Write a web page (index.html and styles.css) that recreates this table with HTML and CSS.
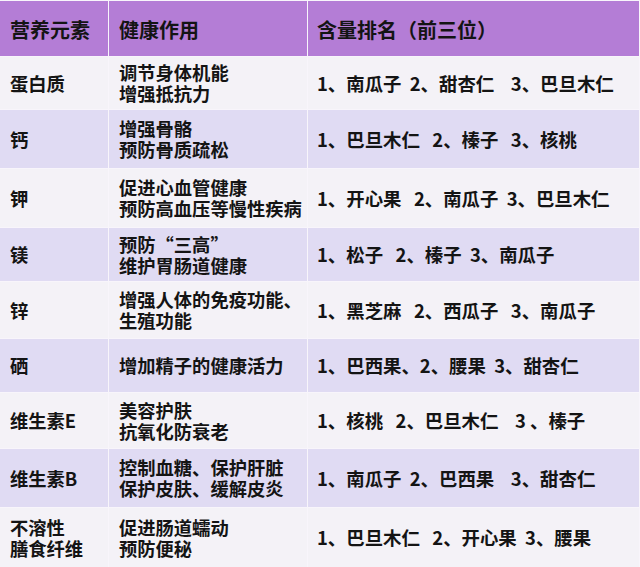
FILE: index.html
```html
<!DOCTYPE html>
<html lang="zh">
<head>
<meta charset="utf-8">
<link rel="stylesheet" href="styles.css">
</head>
<body>
<div class="table">
  <div class="row head">
    <div class="cell">营养元素</div>
    <div class="cell">健康作用</div>
    <div class="cell">含量排名（前三位）</div>
  </div>
  <div class="row odd">
    <div class="cell">蛋白质</div>
    <div class="cell">调节身体机能<br>增强抵抗力</div>
    <div class="cell rank">1、南瓜子  2、甜杏仁    3、巴旦木仁</div>
  </div>
  <div class="row even">
    <div class="cell">钙</div>
    <div class="cell">增强骨骼<br>预防骨质疏松</div>
    <div class="cell rank">1、巴旦木仁   2、榛子   3、核桃</div>
  </div>
  <div class="row odd">
    <div class="cell">钾</div>
    <div class="cell">促进心血管健康<br>预防高血压等慢性疾病</div>
    <div class="cell rank">1、开心果   2、南瓜子  3、巴旦木仁</div>
  </div>
  <div class="row even">
    <div class="cell">镁</div>
    <div class="cell">预防“三高”<br>维护胃肠道健康</div>
    <div class="cell rank">1、松子   2、榛子  3、南瓜子</div>
  </div>
  <div class="row odd">
    <div class="cell">锌</div>
    <div class="cell">增强人体的免疫功能、<br>生殖功能</div>
    <div class="cell rank">1、黑芝麻   2、西瓜子   3、南瓜子</div>
  </div>
  <div class="row even">
    <div class="cell">硒</div>
    <div class="cell">增加精子的健康活力</div>
    <div class="cell rank">1、巴西果、2、腰果  3、甜杏仁</div>
  </div>
  <div class="row odd">
    <div class="cell">维生素E</div>
    <div class="cell">美容护肤<br>抗氧化防衰老</div>
    <div class="cell rank">1、核桃   2、巴旦木仁    3 、榛子</div>
  </div>
  <div class="row even">
    <div class="cell">维生素B</div>
    <div class="cell">控制血糖、保护肝脏<br>保护皮肤、缓解皮炎</div>
    <div class="cell rank">1、南瓜子  2、巴西果    3、甜杏仁</div>
  </div>
  <div class="row odd">
    <div class="cell">不溶性<br>膳食纤维</div>
    <div class="cell">促进肠道蠕动<br>预防便秘</div>
    <div class="cell rank">1、巴旦木仁   2、开心果  3、腰果</div>
  </div>
</div>
</body>
</html>
```

FILE: styles.css
```css
html, body {
  margin: 0;
  padding: 0;
  width: 640px;
  height: 567px;
  overflow: hidden;
}
body {
  font-family: "Noto Sans CJK SC", "Noto Sans", sans-serif;
  font-weight: 700;
  color: #141414;
  background: #f6f3fa;
}
.table {
  display: grid;
  grid-template-rows: 55px 52px 58px 58px 53px 56px 53px 55px 58px 59px;
  row-gap: 1px;
  padding: 1px 1px 0 0;
  background: #f8f5fb;
  height: 567px;
  box-sizing: border-box;
}
.row {
  display: grid;
  grid-template-columns: 108px 198px 1fr;
  column-gap: 1px;
}
.cell {
  display: flex;
  align-items: center;
  padding-left: 10px;
  font-size: 18.3px;
  line-height: 21px;
}
.cell.rank {
  padding-left: 9px;
  white-space: pre;
  font-size: 18.4px;
}
.head .cell {
  background: #b47dd6;
  font-size: 20px;
  padding-top: 1px;
}
.head .cell:nth-child(3) {
  padding-left: 9px;
}
.odd .cell {
  background: #f4f2f7;
}
.even .cell {
  background: #e0dbf3;
}
```
